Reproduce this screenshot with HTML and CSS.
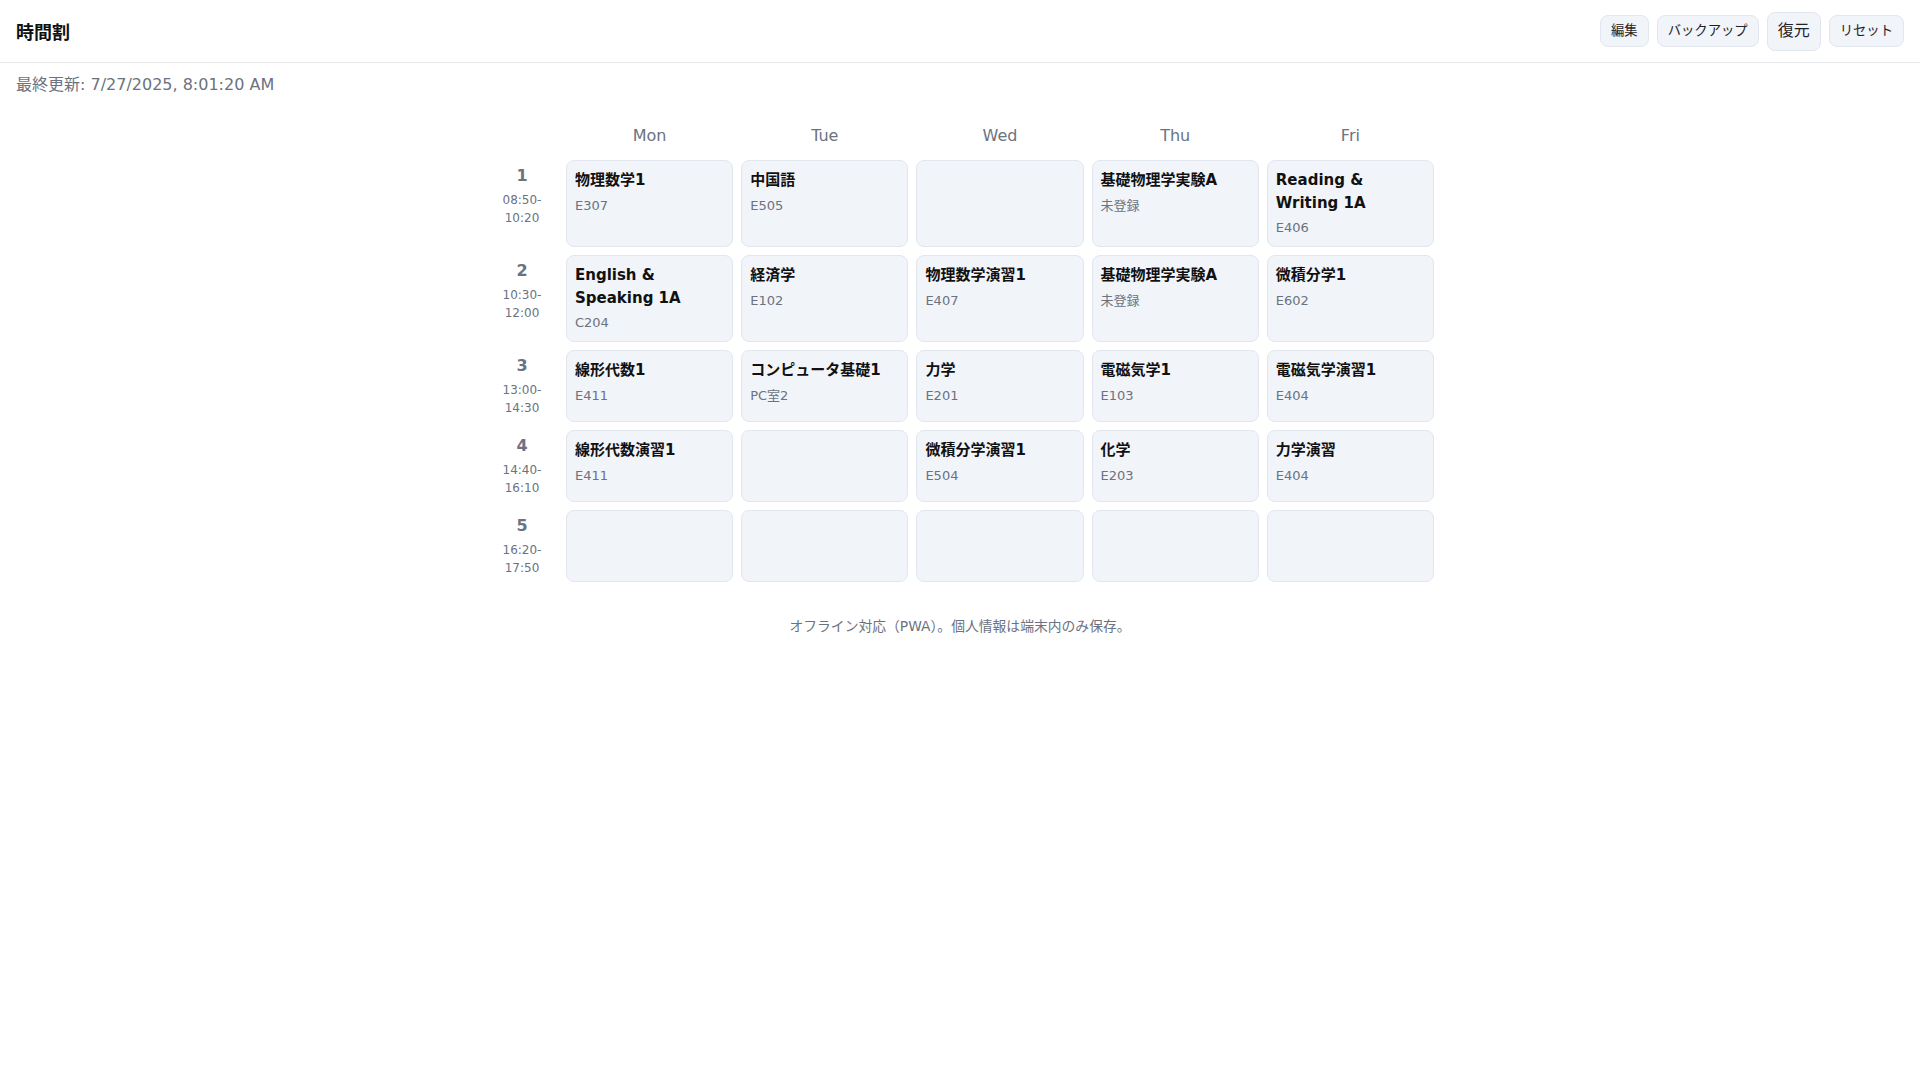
FILE: index.html
```html
<!DOCTYPE html>
<html lang="ja">
<head>
<meta charset="utf-8">
<title>時間割</title>
<link rel="stylesheet" href="styles.css">
</head>
<body>
<header class="topbar">
  <h1 class="app-title">時間割</h1>
  <div class="actions">
    <button class="btn">編集</button>
    <button class="btn">バックアップ</button>
    <button class="btn btn-lg">復元</button>
    <button class="btn">リセット</button>
  </div>
</header>
<p class="meta">最終更新: 7/27/2025, 8:01:20 AM</p>
<main class="timetable">
  <div class="corner"></div>
  <div class="day">Mon</div>
  <div class="day">Tue</div>
  <div class="day">Wed</div>
  <div class="day">Thu</div>
  <div class="day">Fri</div>

  <div class="period"><div class="pnum">1</div><div class="ptime">08:50-<br>10:20</div></div>
  <div class="cell"><div class="ctitle">物理数学1</div><div class="croom">E307</div></div>
  <div class="cell"><div class="ctitle">中国語</div><div class="croom">E505</div></div>
  <div class="cell"></div>
  <div class="cell"><div class="ctitle">基礎物理学実験A</div><div class="croom">未登録</div></div>
  <div class="cell"><div class="ctitle">Reading &amp; Writing 1A</div><div class="croom">E406</div></div>

  <div class="period"><div class="pnum">2</div><div class="ptime">10:30-<br>12:00</div></div>
  <div class="cell"><div class="ctitle">English &amp; Speaking 1A</div><div class="croom">C204</div></div>
  <div class="cell"><div class="ctitle">経済学</div><div class="croom">E102</div></div>
  <div class="cell"><div class="ctitle">物理数学演習1</div><div class="croom">E407</div></div>
  <div class="cell"><div class="ctitle">基礎物理学実験A</div><div class="croom">未登録</div></div>
  <div class="cell"><div class="ctitle">微積分学1</div><div class="croom">E602</div></div>

  <div class="period"><div class="pnum">3</div><div class="ptime">13:00-<br>14:30</div></div>
  <div class="cell"><div class="ctitle">線形代数1</div><div class="croom">E411</div></div>
  <div class="cell"><div class="ctitle">コンピュータ基礎1</div><div class="croom">PC室2</div></div>
  <div class="cell"><div class="ctitle">力学</div><div class="croom">E201</div></div>
  <div class="cell"><div class="ctitle">電磁気学1</div><div class="croom">E103</div></div>
  <div class="cell"><div class="ctitle">電磁気学演習1</div><div class="croom">E404</div></div>

  <div class="period"><div class="pnum">4</div><div class="ptime">14:40-<br>16:10</div></div>
  <div class="cell"><div class="ctitle">線形代数演習1</div><div class="croom">E411</div></div>
  <div class="cell"></div>
  <div class="cell"><div class="ctitle">微積分学演習1</div><div class="croom">E504</div></div>
  <div class="cell"><div class="ctitle">化学</div><div class="croom">E203</div></div>
  <div class="cell"><div class="ctitle">力学演習</div><div class="croom">E404</div></div>

  <div class="period"><div class="pnum">5</div><div class="ptime">16:20-<br>17:50</div></div>
  <div class="cell"></div>
  <div class="cell"></div>
  <div class="cell"></div>
  <div class="cell"></div>
  <div class="cell"></div>
</main>
<footer class="note">オフライン対応（PWA）。個人情報は端末内のみ保存。</footer>
</body>
</html>
```
FILE: styles.css
```css
html, body {
  margin: 0;
  padding: 0;
  background: #ffffff;
}
body {
  font-family: "DejaVu Sans", "Noto Sans CJK JP", sans-serif;
  color: #111111;
}
.topbar {
  display: flex;
  align-items: center;
  justify-content: space-between;
  height: 62px;
  padding: 0 16px;
  border-bottom: 1px solid #e5e7eb;
}
.app-title {
  margin: 0;
  font-size: 18px;
  font-weight: 700;
  color: #111111;
}
.actions {
  display: flex;
  align-items: center;
  gap: 8px;
}
.btn {
  font-family: inherit;
  font-size: 13.333px;
  height: 32px;
  padding: 0 10px;
  border: 1px solid #e2e6ee;
  border-radius: 8px;
  background: #f1f4f9;
  color: #1f2328;
  line-height: 1;
}
.btn-lg {
  font-size: 16px;
  height: 39px;
}
.meta {
  margin: 0;
  padding: 10px 16px 0;
  font-size: 16px;
  line-height: 24px;
  color: #6b7280;
}
.timetable {
  width: 948px;
  margin: 27px auto 0;
  display: grid;
  grid-template-columns: 72px repeat(5, 1fr);
  gap: 8px;
}
.day {
  text-align: center;
  font-size: 16px;
  line-height: 24px;
  padding-bottom: 4px;
  color: #6b7280;
}
.period {
  text-align: center;
  color: #6b7280;
}
.pnum {
  font-size: 16px;
  font-weight: 700;
  line-height: 14px;
  padding-top: 9px;
}
.ptime {
  margin-top: 9px;
  font-size: 12px;
  line-height: 17.6px;
}
.cell {
  box-sizing: border-box;
  min-height: 72px;
  padding: 8px;
  border: 1px solid #e2e6ee;
  border-radius: 8px;
  background: #f1f4f9;
}
.ctitle {
  font-size: 15px;
  font-weight: 700;
  line-height: 22.5px;
  color: #111111;
}
.croom {
  margin-top: 4px;
  font-size: 13px;
  line-height: 20px;
  color: #6b7280;
}
.note {
  margin-top: 34px;
  text-align: center;
  font-size: 13.8px;
  line-height: 20px;
  color: #6b7280;
}
```
